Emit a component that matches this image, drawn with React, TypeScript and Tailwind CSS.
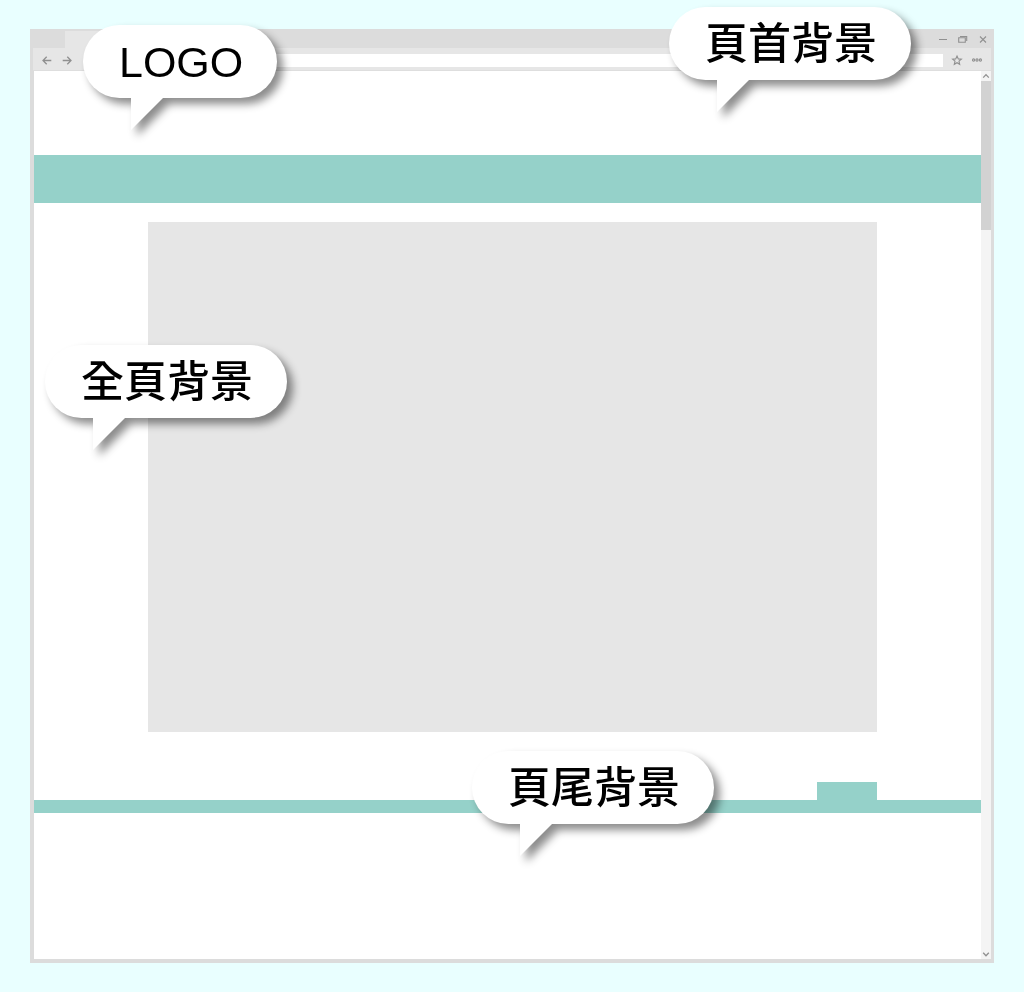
import type { ReactNode } from "react";

const iconStroke = {
  fill: "none",
  stroke: "#909090",
  strokeWidth: 1.3,
} as const;

function Bubble({ children, className }: { children: ReactNode; className: string }) {
  return (
    <div className={`absolute z-10 drop-shadow-[6px_6px_4px_rgba(0,0,0,0.45)] ${className}`}>
      <div className="flex h-[73px] items-center rounded-full bg-white pt-[2px] pr-[34px] pl-9 text-[43px] leading-none font-medium whitespace-nowrap text-black">
        {children}
      </div>
      <svg className="ml-12 block h-8 w-8" viewBox="0 0 32 32" aria-hidden="true">
        <path d="M0 -1H33L0 32Z" fill="#fff" />
      </svg>
    </div>
  );
}

function IconButton({ label, children, className = "" }: { label: string; children: ReactNode; className?: string }) {
  return (
    <button type="button" aria-label={label} className={`flex shrink-0 items-center justify-center ${className}`}>
      {children}
    </button>
  );
}

function TitleBar() {
  return (
    <div className="flex h-[19px] bg-[#dcdcdc]">
      <div className="mt-[2px] ml-[35px] w-[180px] bg-[#e6e6e6]" />
      <div className="ml-auto flex items-center gap-2 pr-[5px]">
        <IconButton label="Minimize" className="size-3">
          <svg className="size-3" viewBox="0 0 12 12">
            <path d="M2 6.5H10" {...iconStroke} strokeWidth={1} />
          </svg>
        </IconButton>
        <IconButton label="Restore" className="size-3">
          <svg className="size-3" viewBox="0 0 12 12">
            <path d="M1.7 4.7H8.3V9.3H1.7ZM3 3.5H9.7V8" {...iconStroke} strokeWidth={1.1} />
          </svg>
        </IconButton>
        <IconButton label="Close" className="size-3">
          <svg className="size-3" viewBox="0 0 12 12">
            <path d="M3 3.5L9 9.5M9 3.5L3 9.5" {...iconStroke} strokeWidth={1.1} />
          </svg>
        </IconButton>
      </div>
    </div>
  );
}

function Toolbar() {
  return (
    <div className="mr-[3px] ml-[3px] flex h-[23px] items-center border-b border-[#dedede] bg-[#e6e6e6] pt-[2px] pl-2">
      <IconButton label="Back" className="size-3">
        <svg className="size-3" viewBox="0 0 12 12">
          <path d="M10.3 6.5H2M5.7 2.7L2 6.5L5.7 10.3" {...iconStroke} />
        </svg>
      </IconButton>
      <IconButton label="Forward" className="ml-2 size-3">
        <svg className="size-3" viewBox="0 0 12 12">
          <path d="M1.7 6.5H10M6.3 2.7L10 6.5L6.3 10.3" {...iconStroke} />
        </svg>
      </IconButton>
      <input aria-label="Address" className="ml-5 h-[13px] min-w-0 flex-1 bg-white outline-none" />
      <IconButton label="Favorite" className="ml-2 size-3">
        <svg className="size-3" viewBox="0 0 12 12">
          <path
            d="M6 2L7.3 4.9L10.4 5.2L8 7.2L8.7 10.3L6 8.7L3.3 10.3L4 7.2L1.6 5.2L4.7 4.9Z"
            {...iconStroke}
            strokeWidth={1.1}
          />
        </svg>
      </IconButton>
      <IconButton label="More" className="mr-2 ml-2 size-3">
        <svg className="size-3" viewBox="0 0 12 12">
          <g {...iconStroke} strokeWidth={1.1}>
            <circle cx="2.6" cy="6" r="1.1" />
            <circle cx="6" cy="6" r="1.1" />
            <circle cx="9.4" cy="6" r="1.1" />
          </g>
        </svg>
      </IconButton>
    </div>
  );
}

function ScrollBar() {
  return (
    <div className="flex w-[10px] shrink-0 flex-col bg-[#f4f4f4]">
      <IconButton label="Scroll up" className="h-[10px] w-full">
        <svg className="h-[10px] w-[10px]" viewBox="0 0 10 10">
          <path d="M2.2 6.6L5 3.6L7.8 6.6" {...iconStroke} />
        </svg>
      </IconButton>
      <div className="h-[149px] bg-[#d2d2d2]" />
      <IconButton label="Scroll down" className="mt-auto h-[10px] w-full">
        <svg className="h-[10px] w-[10px]" viewBox="0 0 10 10">
          <path d="M2.2 3.8L5 6.8L7.8 3.8" {...iconStroke} />
        </svg>
      </IconButton>
    </div>
  );
}

export default function App() {
  return (
    <div className="min-h-screen bg-[#e9ffff] px-[30px] py-[29px] font-['Liberation_Sans','Noto_Sans_CJK_TC',sans-serif]">
      <div className="relative bg-[#dcdcdc] pb-1">
        <TitleBar />
        <Toolbar />
        <div className="mr-[3px] ml-1 flex">
          <div className="min-w-0 flex-1 bg-white">
            <header>
              <div className="h-[84px]" />
              <div className="h-12 bg-[#95d1c9]" />
            </header>
            <main className="pt-[19px] pr-[11%] pl-[12%]">
              <div className="h-[510px] bg-[#e6e6e6]" />
            </main>
            <footer className="pt-[50px]">
              <div className="flex justify-end pr-[11%]">
                <div className="h-[18px] w-[60px] bg-[#95d1c9]" />
              </div>
              <div className="h-[13px] bg-[#95d1c9]" />
              <div className="h-[146px]" />
            </footer>
          </div>
          <ScrollBar />
        </div>

        <Bubble className="-top-1 left-[53px]">LOGO</Bubble>
        <Bubble className="-top-[22px] right-[83px]">頁首背景</Bubble>
        <Bubble className="top-[316px] left-[15px]">全頁背景</Bubble>
        <Bubble className="top-[722px] left-[442px]">頁尾背景</Bubble>
      </div>
    </div>
  );
}
